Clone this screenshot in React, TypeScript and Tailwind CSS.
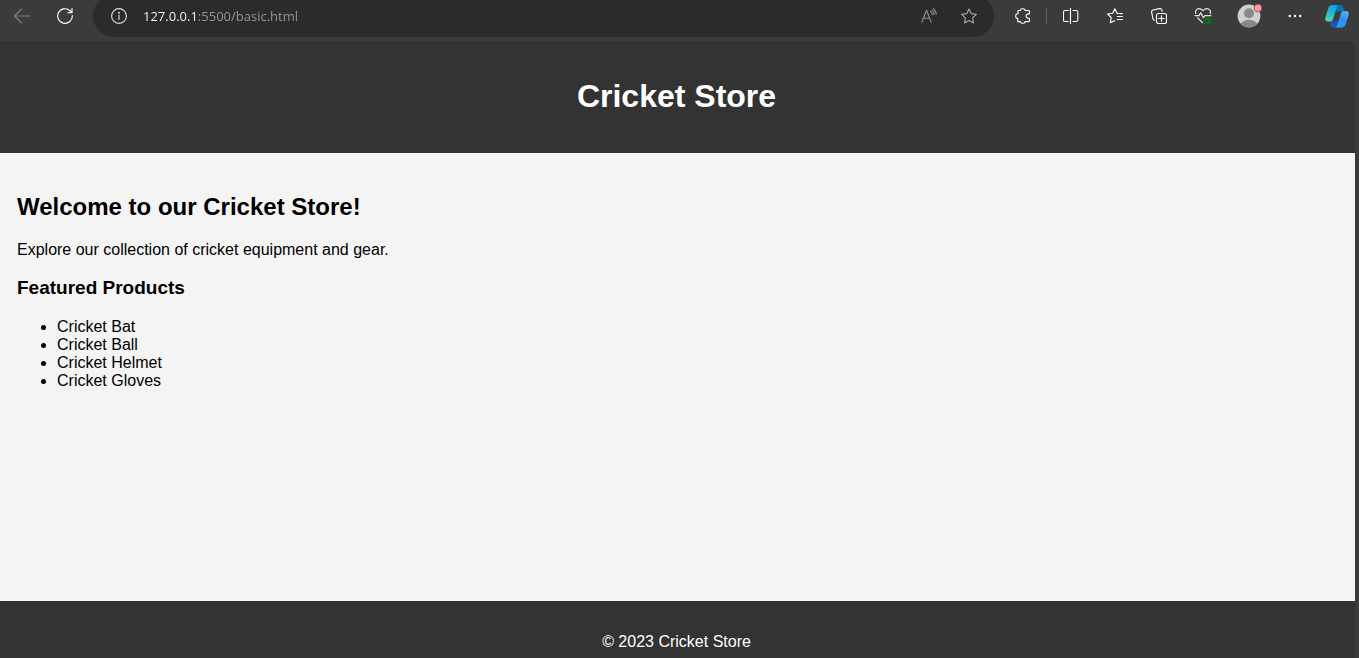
import { useState } from "react";
import type { ReactNode } from "react";

const products = ["Cricket Bat", "Cricket Ball", "Cricket Helmet", "Cricket Gloves"];

function ToolButton({ label, size = "w-11", tone = "text-white", children }: { label: string; size?: string; tone?: string; children: ReactNode }) {
  return (
    <button type="button" aria-label={label} className={`flex h-8 shrink-0 items-center justify-center ${size} ${tone}`}>
      {children}
    </button>
  );
}

function Icon({ children }: { children: ReactNode }) {
  return (
    <svg viewBox="0 0 16 16" className="size-4" fill="none" stroke="currentColor" strokeWidth="1.1" strokeLinecap="round" strokeLinejoin="round" aria-hidden="true">
      {children}
    </svg>
  );
}

function CopilotLogo() {
  return (
    <svg viewBox="0 0 24 23" className="h-[23px] w-6" aria-hidden="true">
      <defs>
        <linearGradient id="teal" x1="0.7" y1="0" x2="0.2" y2="1">
          <stop offset="0" stopColor="#0b9fdc" />
          <stop offset="0.5" stopColor="#20b8d2" />
          <stop offset="1" stopColor="#5ddc94" />
        </linearGradient>
        <linearGradient id="blue" x1="0.8" y1="0" x2="0.2" y2="1">
          <stop offset="0" stopColor="#55b4f8" />
          <stop offset="0.45" stopColor="#2d8df3" />
          <stop offset="1" stopColor="#25a0ee" />
        </linearGradient>
      </defs>
      <path d="M10 0h5.500c1.600 0 2.200 1 2.700 2.600L19.300 6H16c-1.800 0-2.800.8-3.400 2L11 4z" fill="#0874b5" />
      <path d="M14 22.500H8.500c-1.600 0-2.200-1-2.700-2.600L4.700 16.500H8c1.800 0 2.800-.8 3.400-2L13 18.500z" fill="#1f52cf" />
      <path d="M7.500 0H14c-1.500.3-2 1.500-2.500 3L8.300 13.800c-.5 1.800-1.300 2.700-3 2.700H3C.7 16.500-.2 14.800.4 12.500L3 4C3.800 1.400 5 0 7.500 0z" fill="url(#teal)" />
      <path d="M16.500 22.500H10c1.500-.3 2-1.500 2.500-3l3.200-10.800c.5-1.800 1.300-2.700 3-2.700H21c2.300 0 3.200 1.700 2.600 4L21 18.500c-.8 2.600-2 4-4.500 4z" fill="url(#blue)" />
    </svg>
  );
}

function Toolbar() {
  const [address, setAddress] = useState("127.0.0.1:5500/basic.html");
  return (
    <nav aria-label="Browser toolbar" className="flex h-[41px] items-start overflow-hidden bg-[#3b3b3b] pr-0.5">
      <ToolButton label="Back" size="w-[43px]" tone="text-[#7f7f7f]">
        <Icon><path d="M15.500 8H.7M7.500 1 .5 8l7 7" /></Icon>
      </ToolButton>
      <ToolButton label="Refresh">
        <Icon><path d="M15.300 7.500A7.300 7.300 0 1 1 12.800 2.500L14.800 4.500M15 .5v4.300h-4.300" /></Icon>
      </ToolButton>
      <div className="-mt-[5px] mr-[7px] ml-1.5 flex h-[42px] min-w-0 flex-1 items-center rounded-full bg-[#2b2b2b] pr-[5px] pl-0.5">
        <ToolButton label="Site information" size="w-12" tone="text-[#e0e0e0]">
          <Icon>
            <circle cx="8" cy="8" r="7.400" />
            <path d="M8 7v4.500" />
            <circle cx="8" cy="4.700" r=".4" fill="currentColor" />
          </Icon>
        </ToolButton>
        <input
          aria-label="Address"
          value={address}
          onChange={(event) => setAddress(event.target.value)}
          className="h-6 min-w-0 flex-1 bg-[linear-gradient(90deg,#ffffff_54px,#989898_54px)] bg-clip-text font-['Open_Sans',sans-serif] text-[13px] text-transparent caret-white outline-none"
        />
        <ToolButton label="Read aloud" size="w-10" tone="text-[#909090]">
          <Icon><path d="m.8 14.300 4.700-12 4.700 12M2.300 10.300h6.400M9.500 3.300c1 .9 1.500 2 1.500 3.200M11 1.900c1.300 1.200 2 2.800 2 4.600M12.500.6c1.700 1.500 2.700 3.400 2.800 5.700" /></Icon>
        </ToolButton>
        <ToolButton label="Add to favorites" size="w-10" tone="text-[#a8a8a8]">
          <Icon><path d="m8 .9 2.200 4.700 5.100.7-3.700 3.600.9 5.100L8 12.600 3.500 15l.9-5.100L.7 6.300l5.100-.7z" /></Icon>
        </ToolButton>
      </div>
      <ToolButton label="Extensions">
        <Icon><path d="M3 2.500h2.500V2A1.500 1.500 0 0 1 7 .7h1.500A1.500 1.500 0 0 1 10 2v.5h3.500A1 1 0 0 1 14.500 3.500v2.400h-1.700a2.200 2.200 0 0 0 0 4.300h1.700v2.400a1 1 0 0 1-1 1H10v.4a1.500 1.500 0 0 1-1.500 1.300H7A1.500 1.500 0 0 1 5.500 14v-.4H2.800v-3.200h-.5A1.500 1.500 0 0 1 .8 8.900V7.300a1.500 1.500 0 0 1 1.500-1.500H3z" /></Icon>
      </ToolButton>
      <span className="mt-2 mr-0.5 ml-px h-4 w-px shrink-0 bg-[#606060]" />
      <ToolButton label="Split screen">
        <Icon><path d="M7.500 .5v15M5.500 2.500H2.300A1.600 1.600 0 0 0 .5 4.100v7.800a1.600 1.600 0 0 0 1.600 1.600h3.200M10 2.500h3.200a1.600 1.600 0 0 1 1.600 1.600v7.800a1.600 1.600 0 0 1-1.600 1.600H10" /></Icon>
      </ToolButton>
      <ToolButton label="Favorites">
        <Icon><path d="M14 5.700 10 5.300 7.900.8 5.700 5.300.6 6l3.600 3.500-.9 5.300 4.300-2.100M10.300 5.500h5.200M10.300 8.500h5.200M10.300 11.500h5.200" /></Icon>
      </ToolButton>
      <ToolButton label="Collections">
        <Icon>
          <rect x="5.500" y="5.500" width="10" height="10" rx="2" />
          <path d="M10.500 7.800v5.400M7.800 10.500h5.400M3.300 12.300A2 2 0 0 1 1.900 10.700L.6 4.200A2 2 0 0 1 2.100 2L8.500.6a2 2 0 0 1 2.300 1.500l.3 1.300" />
        </Icon>
      </ToolButton>
      <ToolButton label="Browser essentials">
        <svg viewBox="0 0 18 18" className="size-[18px]" fill="none" stroke="#e2e2e2" strokeWidth="1.200" strokeLinecap="round" strokeLinejoin="round" aria-hidden="true">
          <path d="M1.700 6.500C1 4 2.500 1.600 5 1.600c1.700 0 2.900.9 4 2 1.100-1.100 2.300-2 4-2 2.500 0 4 2.400 3.300 4.900M1 8.600h4.100l1.600-3 2.700 5 1.500-2H17M3.800 11l4.600 4.500" />
          <circle cx="13.300" cy="13.700" r="3.800" fill="#0f6f16" stroke="none" />
          <path d="m11.800 13.900 1 1 2-2.200" stroke="#2c4a2d" />
        </svg>
      </ToolButton>
      <ToolButton label="Profile" size="w-12">
        <svg viewBox="0 0 26 26" className="size-[26px]" aria-hidden="true">
          <defs><clipPath id="face"><circle cx="13" cy="13" r="11.200" /></clipPath></defs>
          <circle cx="13" cy="13" r="11.400" fill="#d2d0ce" />
          <g fill="#8a8886" clipPath="url(#face)">
            <circle cx="13" cy="10.300" r="5" />
            <ellipse cx="13" cy="22.500" rx="8.500" ry="5.800" />
          </g>
          <circle cx="22" cy="5" r="3.900" fill="#ff9b98" stroke="#3b3b3b" strokeWidth=".6" />
        </svg>
      </ToolButton>
      <ToolButton label="Settings and more">
        <svg viewBox="0 0 16 16" className="size-4" fill="currentColor" aria-hidden="true">
          <circle cx="2.800" cy="8" r="1.200" /><circle cx="8" cy="8" r="1.200" /><circle cx="13.200" cy="8" r="1.200" />
        </svg>
      </ToolButton>
      <ToolButton label="Copilot" size="w-10"><CopilotLogo /></ToolButton>
    </nav>
  );
}

export default function App() {
  return (
    <div className="flex min-h-screen flex-col bg-[#3b3b3b] font-['Liberation_Sans',Arial,sans-serif] text-base leading-[18px] text-black">
      <Toolbar />
      <div className="mr-1 flex flex-1 flex-col rounded-tr-lg bg-[#333333]">
        <header className="pt-[37px] pr-[18px] pb-[39px] pl-4 text-center text-white">
          <h1 className="text-[32px] leading-9 font-bold">Cricket Store</h1>
        </header>
        <main className="flex-1 bg-[#f4f4f4] px-[17px] pt-10">
          <h2 className="text-2xl leading-7 font-bold">Welcome to our Cricket Store!</h2>
          <p className="mt-5">Explore our collection of cricket equipment and gear.</p>
          <h3 className="mt-[18px] text-[19px] leading-[21px] font-bold">Featured Products</h3>
          <ul className="mt-5 list-disc pl-10">
            {products.map((product) => <li key={product}>{product}</li>)}
          </ul>
        </main>
        <footer className="pt-8 pr-[18px] pb-[7px] pl-4 text-center text-white">
          <p>© 2023 Cricket Store</p>
        </footer>
      </div>
    </div>
  );
}
